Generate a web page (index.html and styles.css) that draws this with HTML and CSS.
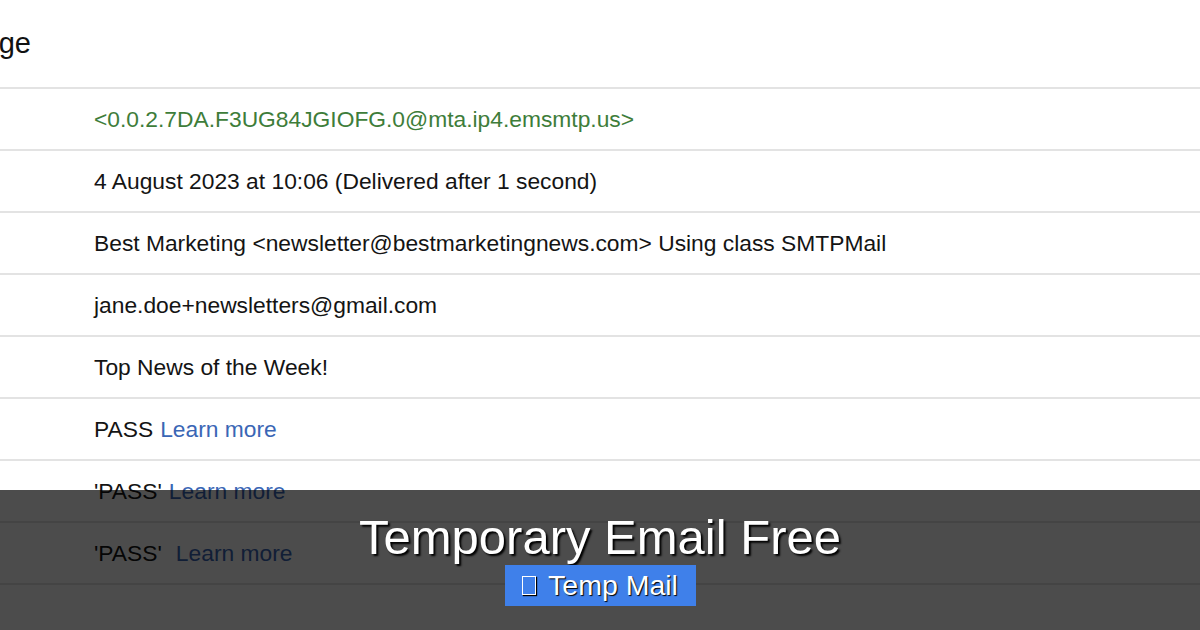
FILE: index.html
```html
<!DOCTYPE html>
<html lang="en">

<head>
    <meta charset="UTF-8">
    <meta name="viewport" content="width=device-width, initial-scale=1.0">
    <title>Temporary Email Free</title>
    <link rel="stylesheet" href="styles.css">
</head>

<body>
    <div class="page">
        <div class="title-wrap">
            <h1 class="title">Original Message</h1>
        </div>

        <div class="rows">
            <div class="row"><span class="msgid">&lt;0.0.2.7DA.F3UG84JGIOFG.0@mta.ip4.emsmtp.us&gt;</span></div>
            <div class="row">4 August 2023 at 10:06 (Delivered after 1 second)</div>
            <div class="row">Best Marketing &lt;newsletter@bestmarketingnews.com&gt; Using class SMTPMail</div>
            <div class="row">jane.doe+newsletters@gmail.com</div>
            <div class="row">Top News of the Week!</div>
            <div class="row">PASS <a class="link" href="#">Learn more</a></div>
            <div class="row">'PASS' <a class="link" href="#">Learn more</a></div>
            <div class="row">'PASS' <a class="link wide" href="#">Learn more</a></div>
            <div class="row"></div>
        </div>
    </div>

    <div class="banner">
        <div class="banner-title">Temporary Email Free</div>
        <a class="banner-btn" href="#"><span class="tofu"></span>Temp Mail</a>
    </div>
</body>

</html>
```

FILE: styles.css
```css
* {
    box-sizing: border-box;
}

html,
body {
    margin: 0;
    height: 100%;
    overflow: hidden;
}

body {
    background-color: #fff;
    font-family: Arial, "Liberation Sans", Helvetica, sans-serif;
    color: #141414;
}

.title-wrap {
    width: 31px;
    height: 87px;
    display: flex;
    justify-content: flex-end;
    align-items: center;
}

.title {
    margin: 0;
    font-size: 29px;
    font-weight: normal;
    white-space: nowrap;
    color: #111;
}

.rows {
    border-top: 2px solid #e3e3e3;
}

.row {
    height: 62px;
    padding-left: 94px;
    display: flex;
    align-items: center;
    font-size: 22.8px;
    border-bottom: 2px solid #e3e3e3;
    white-space: nowrap;
}

.msgid {
    color: #3e7d3a;
}

.link {
    color: #3a66b5;
    text-decoration: none;
    margin-left: 7px;
}

.link.wide {
    margin-left: 14px;
}

.banner {
    position: absolute;
    left: 0;
    right: 0;
    top: 490px;
    height: 140px;
    background-color: rgba(0, 0, 0, 0.7);
    display: flex;
    flex-direction: column;
    align-items: center;
    padding-top: 19px;
}

.banner-title {
    font-size: 49px;
    color: #fff;
    line-height: 56px;
    text-shadow: 2px 2px 2px #000;
}

.banner-btn {
    width: 191px;
    height: 41px;
    background-color: #3f80ea;
    color: #fff;
    font-size: 28.5px;
    text-decoration: none;
    display: flex;
    align-items: center;
    justify-content: center;
    gap: 12px;
    text-shadow: 1px 1px 1px #000;
}

.tofu {
    width: 14px;
    height: 19px;
    border: 1.5px solid #fff;
    box-shadow: 1px 1px 1px #000;
}
```
